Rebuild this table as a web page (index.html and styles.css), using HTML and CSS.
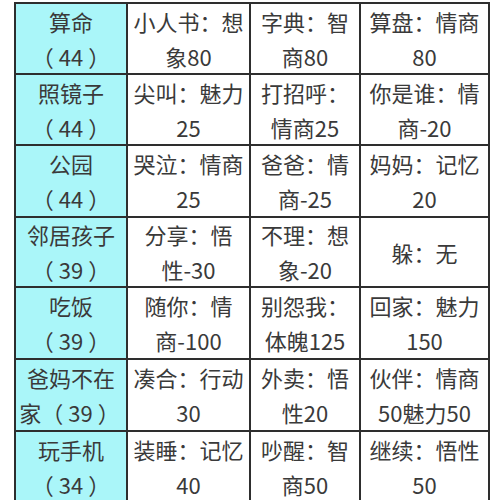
FILE: index.html
```html
<!DOCTYPE html>
<html lang="zh">
<head>
<meta charset="utf-8">
<link rel="stylesheet" href="styles.css">
</head>
<body>
<div class="table">
  <div class="cell head"><div>算命<br><span class="pl">（</span>44<span class="pr">）</span></div></div>
  <div class="cell">小人书：想<br>象80</div>
  <div class="cell">字典：智<br>商80</div>
  <div class="cell">算盘：情商<br>80</div>

  <div class="cell head"><div>照镜子<br><span class="pl">（</span>44<span class="pr">）</span></div></div>
  <div class="cell">尖叫：魅力<br>25</div>
  <div class="cell">打招呼：<br>情商25</div>
  <div class="cell">你是谁：情<br>商-20</div>

  <div class="cell head"><div>公园<br><span class="pl">（</span>44<span class="pr">）</span></div></div>
  <div class="cell">哭泣：情商<br>25</div>
  <div class="cell">爸爸：情<br>商-25</div>
  <div class="cell">妈妈：记忆<br>20</div>

  <div class="cell head"><div>邻居孩子<br><span class="pl">（</span>39<span class="pr">）</span></div></div>
  <div class="cell">分享：悟<br>性-30</div>
  <div class="cell">不理：想<br>象-20</div>
  <div class="cell">躲：无</div>

  <div class="cell head"><div>吃饭<br><span class="pl">（</span>39<span class="pr">）</span></div></div>
  <div class="cell">随你：情<br>商-100</div>
  <div class="cell">别怨我：<br>体魄125</div>
  <div class="cell">回家：魅力<br>150</div>

  <div class="cell head"><div>爸妈不在<br>家<span class="pl pl-mid">（</span>39<span class="pr">）</span></div></div>
  <div class="cell">凑合：行动<br>30</div>
  <div class="cell">外卖：悟<br>性20</div>
  <div class="cell">伙伴：情商<br>50魅力50</div>

  <div class="cell head"><div>玩手机<br><span class="pl">（</span>34<span class="pr">）</span></div></div>
  <div class="cell">装睡：记忆<br>40</div>
  <div class="cell">吵醒：智<br>商50</div>
  <div class="cell">继续：悟性<br>50</div>
</div>
</body>
</html>
```

FILE: styles.css
```css
html, body {
  margin: 0;
  padding: 0;
  background: #ffffff;
  overflow: hidden;
}

body {
  width: 504px;
  height: 500px;
  font-family: "Noto Sans CJK SC", "Noto Sans", sans-serif;
  color: #3a3a3a;
}

.table {
  margin: 2px 0 0 14px;
  width: 476px;
  display: grid;
  grid-template-columns: 110px 121px 108px 127px;
  grid-template-rows: 69px 69px 70px 68px 70px 70px 70px;
  gap: 2px;
  padding: 2px;
  box-sizing: border-box;
  background: #2e2e2e;
}

.cell {
  background: #ffffff;
  display: flex;
  align-items: center;
  justify-content: center;
  text-align: center;
  font-size: 22px;
  line-height: 35px;
  white-space: nowrap;
}

.head {
  background: #aaf6f9;
}

.pl {
  margin: 0 5px 0 3px;
}

.pl-mid {
  margin-left: 0;
}

.pr {
  margin: 0 3px 0 5px;
}
```
